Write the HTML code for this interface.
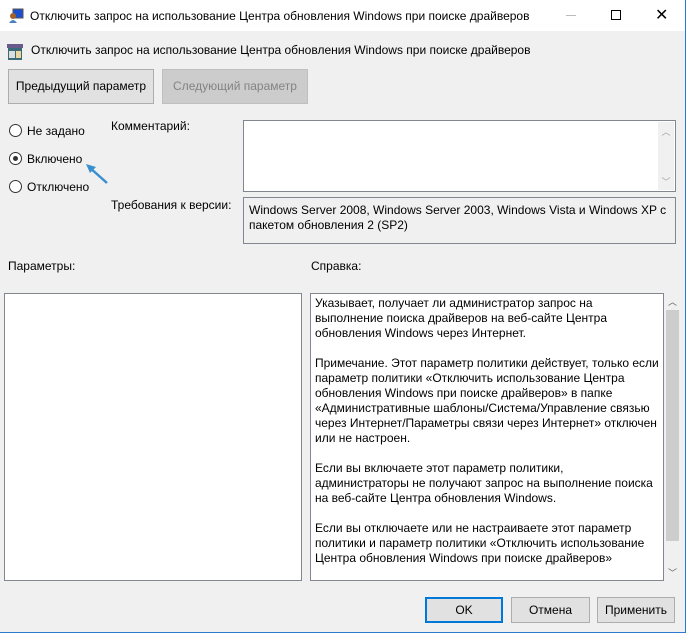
<!DOCTYPE html>
<html><head><meta charset="utf-8"><style>
*{margin:0;padding:0;box-sizing:border-box}
body{width:686px;height:633px;background:#f0f0f0;font-family:"Liberation Sans",sans-serif;font-size:12px;color:#000;position:relative;overflow:hidden}
.a{position:absolute;white-space:nowrap}
.btn{position:absolute;border:1px solid #adadad;background:#e1e1e1;text-align:center;line-height:32px;font-size:12px}
.box{position:absolute;border:1px solid #828790;background:#fff}
.rad{position:absolute;width:13px;height:13px;border:1px solid #333;border-radius:50%;background:#fff}
.sb{position:absolute;background:#f0f0f0;color:#a0a0a0;font-size:9px;text-align:center}
</style></head><body>
<div class="a" style="left:0;top:0;width:686px;height:31px;background:#fff"></div>
<svg class="a" style="left:8px;top:8px" width="16" height="16"><rect x="5" y="1" width="10" height="9" fill="#1a4fd0" stroke="#555"/><circle cx="5" cy="8" r="3" fill="#a0622a"/><path d="M1 15 Q5 9 9 15Z" fill="#4a80c0"/></svg>
<div class="a" style="left:30px;top:9px;font-size:12px">Отключить запрос на использование Центра обновления Windows при поиске драйверов</div>
<div class="a" style="left:566px;top:15px;width:10px;height:1px;background:#bbb"></div>
<div class="a" style="left:611px;top:10px;width:10px;height:10px;border:1px solid #000"></div>
<div class="a" style="left:655px;top:5px;font-size:16px">✕</div>
<div class="a" style="right:0;top:0;width:1px;height:633px;background:#2b79d0"></div>
<div class="a" style="left:0;bottom:0;width:686px;height:1px;background:#2b79d0"></div>
<svg class="a" style="left:7px;top:44px" width="16" height="16"><rect x="0" y="0" width="16" height="4" fill="#6a5a8a"/><rect x="1" y="4" width="14" height="12" fill="#3a6a7a"/><rect x="2" y="7" width="6" height="7" fill="#ddd"/><rect x="9" y="7" width="5" height="7" fill="#e8d8a0"/></svg>
<div class="a" style="left:31px;top:43px">Отключить запрос на использование Центра обновления Windows при поиске драйверов</div>
<div class="btn" style="left:8px;top:69px;width:146px;height:35px">Предыдущий параметр</div>
<div class="btn" style="left:162px;top:69px;width:146px;height:35px;background:#ccc;border-color:#bfbfbf;color:#838383">Следующий параметр</div>
<div class="rad" style="left:9px;top:124px"></div>
<div class="a" style="left:27px;top:124px">Не задано</div>
<div class="rad" style="left:9px;top:152px"></div><div class="a" style="left:13px;top:156px;width:5px;height:5px;border-radius:50%;background:#333"></div>
<div class="a" style="left:27px;top:152px">Включено</div>
<div class="rad" style="left:9px;top:180px"></div>
<div class="a" style="left:27px;top:180px">Отключено</div>
<svg class="a" style="left:80px;top:158px" width="34" height="30"><path d="M27 25 L9 9" stroke="#3a8fd0" stroke-width="2.5"/><path d="M6 6 L16 9 L10 15Z" fill="#3a8fd0"/></svg>
<div class="a" style="left:111px;top:119px">Комментарий:</div>
<div class="box" style="left:243px;top:120px;width:433px;height:72px"><div class="sb" style="right:1px;top:1px;width:16px;height:68px"><div style="margin-top:3px">︿</div><div style="position:absolute;bottom:2px;width:16px">﹀</div></div></div>
<div class="a" style="left:111px;top:198px">Требования к версии:</div>
<div class="box" style="left:243px;top:197px;width:433px;height:47px;background:#f0f0f0;padding:5px 0 0 5px;line-height:15px;white-space:normal">Windows Server 2008, Windows Server 2003, Windows Vista и Windows XP с<br>пакетом обновления 2 (SP2)</div>
<div class="a" style="left:8px;top:259px">Параметры:</div>
<div class="a" style="left:311px;top:259px">Справка:</div>
<div class="box" style="left:4px;top:293px;width:298px;height:288px"></div>
<div class="box" style="left:310px;top:293px;width:354px;height:288px;padding:2px 0 0 4px;line-height:15px;white-space:nowrap">Указывает, получает ли администратор запрос на<br>выполнение поиска драйверов на веб-сайте Центра<br>обновления Windows через Интернет.<br><br>Примечание. Этот параметр политики действует, только если<br>параметр политики «Отключить использование Центра<br>обновления Windows при поиске драйверов» в папке<br>«Административные шаблоны/Система/Управление связью<br>через Интернет/Параметры связи через Интернет» отключен<br>или не настроен.<br><br>Если вы включаете этот параметр политики,<br>администраторы не получают запрос на выполнение поиска<br>на веб-сайте Центра обновления Windows.<br><br>Если вы отключаете или не настраиваете этот параметр<br>политики и параметр политики «Отключить использование<br>Центра обновления Windows при поиске драйверов»</div>
<div class="sb" style="left:664px;top:293px;width:17px;height:288px;color:#606060"><div style="margin-top:2px">︿</div><div style="position:absolute;left:2px;top:17px;width:13px;height:231px;background:#cdcdcd"></div><div style="position:absolute;bottom:2px;width:17px">﹀</div></div>
<div class="btn" style="left:425px;top:597px;width:78px;height:26px;line-height:22px;border:2px solid #0078d7">OK</div>
<div class="btn" style="left:511px;top:597px;width:79px;height:26px;line-height:24px">Отмена</div>
<div class="btn" style="left:597px;top:597px;width:78px;height:26px;line-height:24px">Применить</div>
</body></html>
